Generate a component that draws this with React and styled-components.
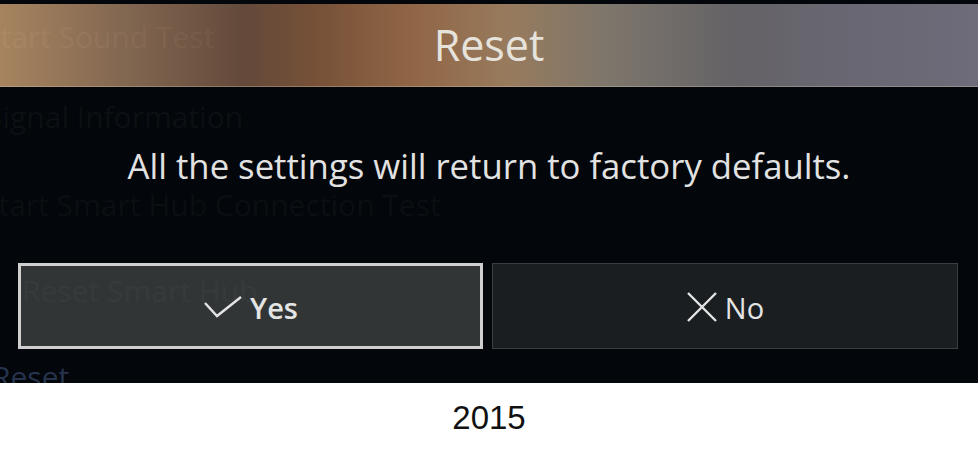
import React from "react"
import styled, { createGlobalStyle } from "styled-components"

const Global = createGlobalStyle`
  html, body {
    margin: 0;
    padding: 0;
    background: #ffffff;
  }
`

const Page = styled.div`
  width: 978px;
  height: 459px;
  display: flex;
  flex-direction: column;
  background: #ffffff;
  overflow: hidden;
`

const Screen = styled.div`
  position: relative;
  height: 383px;
  background: #03060a;
  overflow: hidden;
  font-family: "Open Sans", "Noto Sans", sans-serif;
`

// the settings menu that shows faintly through the dialog
const BackMenu = styled.div`
  position: absolute;
  inset: 0;
  display: flex;
  flex-direction: column;
  font-size: 30px;
`

const BackItem = styled.div`
  height: ${(p) => p.h}px;
  flex-shrink: 0;
  display: flex;
  align-items: center;
  margin-left: ${(p) => p.x || 0}px;
  white-space: nowrap;
  color: ${(p) => p.color};
`

const Dialog = styled.div`
  position: relative;
  height: 100%;
  display: flex;
  flex-direction: column;
`

const Header = styled.div`
  height: 82px;
  margin-top: 4px;
  border-bottom: 1px solid rgba(220, 200, 180, 0.35);
  display: flex;
  align-items: center;
  justify-content: center;
  background: linear-gradient(
    90deg,
    rgba(184, 145, 104, 0.9) 0%,
    rgba(143, 112, 88, 0.9) 13%,
    rgba(110, 80, 63, 0.9) 25%,
    rgba(130, 88, 60, 0.9) 32%,
    rgba(160, 111, 76, 0.9) 42%,
    rgba(168, 135, 102, 0.9) 52%,
    rgba(139, 130, 118, 0.9) 62%,
    rgba(111, 108, 112, 0.9) 75%,
    rgba(117, 113, 127, 0.9) 88%,
    rgba(122, 118, 134, 0.9) 100%
  );
`

const Title = styled.div`
  font-size: 43px;
  color: #e6e2dc;
  padding-bottom: 2px;
`

const Message = styled.div`
  height: 176px;
  display: flex;
  align-items: center;
  justify-content: center;
  padding-bottom: 20px;
  box-sizing: border-box;
  font-size: 34.7px;
  color: #e2e2e2;
`

const Buttons = styled.div`
  display: grid;
  grid-template-columns: 465px 466px;
  gap: 9px;
  padding: 0 20px 0 18px;
`

const Button = styled.div`
  height: 86px;
  box-sizing: border-box;
  display: flex;
  align-items: center;
  justify-content: center;
  gap: 7px;
  font-size: 29px;
  font-weight: ${(p) => (p.focused ? 600 : 400)};
  color: #e4e4e4;
  background: ${(p) => (p.focused ? "rgba(52, 56, 57, 0.95)" : "#1a1e21")};
  border: ${(p) => (p.focused ? "3px solid #cfcfcf" : "1px solid #3b3f42")};
  padding-top: 2px;
`

const Caption = styled.div`
  flex: 1;
  display: flex;
  align-items: center;
  justify-content: center;
  padding-bottom: 6px;
  font-family: "Liberation Sans", Arial, sans-serif;
  font-size: 33px;
  color: #111111;
`

const Check = () => (
  <svg width="40" height="24" viewBox="0 0 40 24">
    <path d="M2 8 L14 21 L38 2" fill="none" stroke="#e4e4e4" strokeWidth="2.4" />
  </svg>
)

const Cross = () => (
  <svg width="32" height="32" viewBox="0 0 32 32">
    <path d="M2 2 L30 30 M30 2 L2 30" fill="none" stroke="#e4e4e4" strokeWidth="2.4" />
  </svg>
)

export default function App() {
  return (
    <>
      <Global />
      <Page>
        <Screen>
          <BackMenu>
            <BackItem h={72} x={-16} color="rgba(255,255,255,0.28)">Start Sound Test</BackItem>
            <BackItem h={88} x={-14} color="#0c0f13">Signal Information</BackItem>
            <BackItem h={88} x={-18} color="#0b0e12">Start Smart Hub Connection Test</BackItem>
            <BackItem h={84} x={22} color="rgba(255,255,255,0.4)">Reset Smart Hub</BackItem>
            <BackItem h={88} x={-8} color="#26334d">Reset</BackItem>
          </BackMenu>
          <Dialog>
            <Header>
              <Title>Reset</Title>
            </Header>
            <Message>All the settings will return to factory defaults.</Message>
            <Buttons>
              <Button focused>
                <Check />
                Yes
              </Button>
              <Button>
                <Cross />
                No
              </Button>
            </Buttons>
          </Dialog>
        </Screen>
        <Caption>2015</Caption>
      </Page>
    </>
  )
}
